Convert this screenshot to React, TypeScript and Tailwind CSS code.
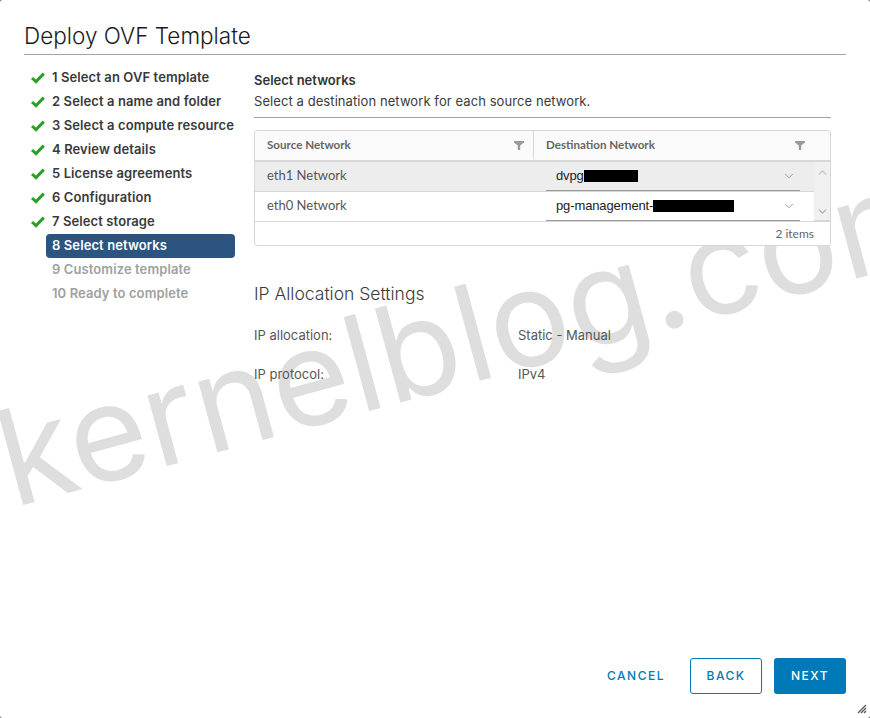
import { ChevronDown, ChevronUp } from 'lucide-react'

const steps = [
    { label: '1 Select an OVF template', state: 'done' },
    { label: '2 Select a name and folder', state: 'done' },
    { label: '3 Select a compute resource', state: 'done' },
    { label: '4 Review details', state: 'done' },
    { label: '5 License agreements', state: 'done' },
    { label: '6 Configuration', state: 'done' },
    { label: '7 Select storage', state: 'done' },
    { label: '8 Select networks', state: 'active' },
    { label: '9 Customize template', state: 'todo' },
    { label: '10 Ready to complete', state: 'todo' },
]

const sans = "font-['Inter','Noto_Sans',sans-serif]"

function Check() {
    return (
        <svg width="14" height="12" viewBox="0 0 14 12" className="shrink-0">
            <path d="M1 6 L5 9.6 L12.8 1.6" fill="none" stroke="#2f9e27" strokeWidth="3" />
        </svg>
    )
}

function Filter() {
    return (
        <svg width="10" height="9" viewBox="0 0 10 9" className="shrink-0">
            <path d="M0 0 H10 V1.5 L6.2 4.5 V9 H3.8 V4.5 L0 1.5 Z" fill="#9a9a9a" />
        </svg>
    )
}

function Row({ name, value, blockWidth, shaded }: { name: string; value: string; blockWidth: string; shaded?: boolean }) {
    return (
        <div className={`flex h-[30px] items-center border-b border-[#d7d7d7] ${shaded ? 'bg-[#ededed]' : 'bg-white'}`}>
            <div className="w-[279px] pb-0.5 pl-3 text-[13px] text-[#565656]">{name}</div>
            <div className="ml-3 mt-[-1px] flex h-[29px] w-[254px] items-center border-b border-[#9a9a9a] pl-2.5 pr-[4px]">
                <span className="font-['Liberation_Sans',sans-serif] text-[13px] tracking-[-0.12px] text-[#222]">{value}</span>
                <span className={`h-3 bg-black ${blockWidth}`}></span>
                <ChevronDown className="ml-auto text-[#8c8c8c]" size={14} strokeWidth={1.5} />
            </div>
        </div>
    )
}

export default function App() {
    return (
        <div className="w-[870px] bg-[#808080]">
            <div className={`relative flex h-[718px] w-[870px] flex-col overflow-hidden rounded-[3px] bg-white ${sans}`}>
                <div className="pointer-events-none absolute left-[18px] top-[391px] origin-bottom-left -rotate-[15.2deg] whitespace-nowrap font-['Inter',sans-serif] text-[134px] leading-none font-normal text-[#dedede]">
                    kernelblog.com
                </div>

                <div className="relative mx-6 h-[55px] border-b border-[#a3a3a3] pt-[21px] text-[22.5px] leading-[30px] font-light text-[#1b1b1b]">
                    Deploy OVF Template
                </div>

                <div className="relative flex flex-1 pl-[24px] pr-[39px]">
                    <div className="w-[230px] pt-[11px]">
                        {steps.map((s) => (
                            <div key={s.label} className="flex h-6 items-center">
                                <div className="flex w-[22px] justify-center pl-[6px]">
                                    {s.state === 'done' && <Check />}
                                </div>
                                <div
                                    className={`flex h-6 w-[189px] items-center rounded-[4px] pl-1.5 text-[13px] font-semibold tracking-[0.1px] whitespace-nowrap ${
                                        s.state === 'active'
                                            ? 'bg-[#2b5580] text-white'
                                            : s.state === 'todo'
                                              ? 'text-[#a0a0a0]'
                                              : 'text-[#3a3a3a]'
                                    }`}
                                >
                                    {s.label}
                                </div>
                            </div>
                        ))}
                    </div>

                    <div className="w-[577px]">
                        <div className="mt-4 text-[13px] leading-[18px] font-semibold text-[#333]">Select networks</div>
                        <div className="mt-[3px] border-b border-[#a3a3a3] pb-[7px] text-[13px] leading-[18px] tracking-[0.08px] text-[#3a3a3a]">
                            Select a destination network for each source network.
                        </div>

                        <div className="mt-3 overflow-hidden rounded-[3px] border border-[#d7d7d7] bg-white font-['Lato',sans-serif]">
                            <div className="flex h-[31px] border-b-2 border-[#d7d7d7] bg-[#fafafa] pb-px text-[11.6px] font-bold text-[#666]">
                                <div className="flex w-[279px] items-center justify-between border-r border-[#d7d7d7] pl-3 pr-[9px]">
                                    Source Network
                                    <Filter />
                                </div>
                                <div className="flex flex-1 items-center justify-between pl-3 pr-[25px]">
                                    Destination Network
                                    <Filter />
                                </div>
                            </div>
                            <div className="flex h-[60px] border-b-2 border-[#d7d7d7]">
                                <div className="w-[559px]">
                                    <Row name="eth1 Network" value="dvpg" blockWidth="w-[54px]" shaded />
                                    <Row name="eth0 Network" value="pg-management-" blockWidth="w-[81px]" />
                                </div>
                                <div className="flex flex-1 flex-col items-center justify-between bg-[#f0f0f0] pb-0.5 pt-1">
                                    <ChevronUp size={13} className="text-[#c4c4c4]" strokeWidth={2.5} />
                                    <ChevronDown size={13} className="text-[#b0b0b0]" strokeWidth={2.5} />
                                </div>
                            </div>
                            <div className="flex h-[23px] items-center justify-end pr-4 text-[12px] text-[#666]">2 items</div>
                        </div>

                        <div className="mt-[37px] text-[17.5px] leading-[22px] font-light text-[#3a3a3a]">IP Allocation Settings</div>
                        <div className="mt-[21px] flex h-[39px] text-[13px] leading-[18px] text-[#565656]">
                            <div className="w-[264px]">IP allocation:</div>
                            <div>Static - Manual</div>
                        </div>
                        <div className="flex text-[13px] leading-[18px] text-[#565656]">
                            <div className="w-[264px]">IP protocol:</div>
                            <div>IPv4</div>
                        </div>
                    </div>
                </div>

                <div className="relative flex h-[60px] justify-end gap-3 pr-6 text-[12px] font-medium tracking-[1.5px]">
                    <button className="mr-[13px] h-9 px-0 text-[#0079b8]">CANCEL</button>
                    <button className="h-9 w-[72px] rounded-[3px] border border-[#0079b8] text-[#0079b8]">BACK</button>
                    <button className="h-9 w-[72px] rounded-[3px] bg-[#0079b8] text-white">NEXT</button>
                    <svg width="10" height="10" viewBox="0 0 10 10" className="absolute bottom-[4px] right-[3px]">
                        <path d="M1 9 L9 1 M4 9 L9 4 M7 9 L9 7" stroke="#555" strokeWidth="1.2" />
                    </svg>
                </div>
            </div>
        </div>
    )
}
